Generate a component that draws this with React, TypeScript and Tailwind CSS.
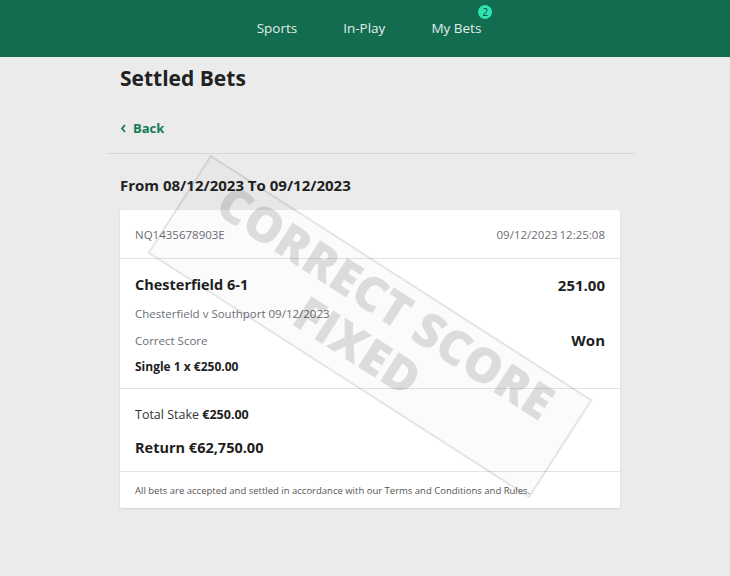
import React from "react";

export default function App() {
  return (
    <div
      className="relative min-h-[576px] w-[730px] overflow-hidden bg-[#eaebea] text-[#1e1e1e]"
      style={{ fontFamily: '"Open Sans", "Noto Sans", sans-serif' }}
    >
      <header className="flex h-[57px] items-center justify-center bg-[#126d50]">
        <nav className="ml-[8px] flex items-center gap-[46px] text-[13.5px] text-[#e4ece9]">
          <span>Sports</span>
          <span>In-Play</span>
          <span className="relative">
            My Bets
            <span className="absolute -right-[11px] -top-[13px] flex h-[14px] w-[14px] items-center justify-center rounded-full bg-[#2de3b0] text-[10px] leading-none text-[#0b4a36]">
              2
            </span>
          </span>
        </nav>
      </header>

      <main className="ml-[106px] w-[529px]">
        <div className="px-[14px]">
          <h1 className="pt-[6px] text-[21px] font-bold leading-[30px] text-[#222]">Settled Bets</h1>
          <div className="mt-[26px] flex items-center gap-[6px] text-[13px] font-bold text-[#137a58]">
            <svg width="7" height="9" viewBox="0 0 7 9" fill="none">
              <path d="M5 1 L2 4.5 L5 8" stroke="#137a58" strokeWidth="1.8" />
            </svg>
            <span>Back</span>
          </div>
        </div>
        <div className="mt-[14px] h-px bg-[#d6d7d6]" />
        <div className="px-[14px]">
          <h2 className="mt-[20px] text-[15px] font-bold leading-[22px] text-[#222]">
            From 08/12/2023 To 09/12/2023
          </h2>

          <section className="mt-[14px] w-[500px] rounded-[2px] bg-white shadow-[0_1px_2px_rgba(0,0,0,0.12)]">
            <div className="flex h-[49px] items-center justify-between border-b border-[#e3e3e3] px-[15px] pt-[2px] text-[11.5px] text-[#6b6f76]">
              <span>NQ1435678903E</span>
              <span>09/12/2023&#8201;12:25:08</span>
            </div>

            <div className="border-b border-[#e3e3e3] px-[15px] pb-[13px] pt-[16px]">
              <div className="flex items-center justify-between text-[14.5px] font-bold leading-[20px] text-[#1e1e1e]">
                <span>Chesterfield 6-1</span>
                <span className="text-[15px]">251.00</span>
              </div>
              <div className="mt-[11px] text-[11.5px] leading-[16px] text-[#6b6f76]">
                Chesterfield v Southport 09/12/2023
              </div>
              <div className="mt-[11px] flex items-center justify-between">
                <span className="text-[11.5px] leading-[16px] text-[#6b6f76]">Correct Score</span>
                <span className="-mt-[2px] text-[15px] font-bold leading-[18px] text-[#1e1e1e]">Won</span>
              </div>
              <div className="mt-[10px] text-[12px] font-bold leading-[16px] text-[#1e1e1e]">
                Single 1 x €250.00
              </div>
            </div>

            <div className="border-b border-[#e3e3e3] px-[15px] pb-[13px] pt-[17px]">
              <div className="text-[12.5px] leading-[18px] text-[#333]">
                Total Stake <span className="font-bold text-[#1e1e1e]">€250.00</span>
              </div>
              <div className="mt-[14px] text-[14.5px] font-bold leading-[20px] text-[#1e1e1e]">
                Return €62,750.00
              </div>
            </div>

            <div className="flex h-[36px] items-center px-[15px] pt-[4px] text-[9.5px] text-[#555]">
              All bets are accepted and settled in accordance with our Terms and Conditions and Rules.
            </div>
          </section>
        </div>
      </main>

      <div className="pointer-events-none absolute left-[143px] top-[268px] flex h-[117px] w-[454px] rotate-[32.7deg] flex-col items-center justify-center border-2 border-[rgba(0,0,0,0.09)] bg-[rgba(0,0,0,0.015)]">
        <div
          className="-mt-[8px] text-center text-[48px] font-extrabold leading-[52px] text-[rgba(0,0,0,0.12)]"
          style={{ fontFamily: '"Open Sans", sans-serif' }}
        >
          CORRECT SCORE
          <br />
          FIXED
        </div>
      </div>
    </div>
  );
}
